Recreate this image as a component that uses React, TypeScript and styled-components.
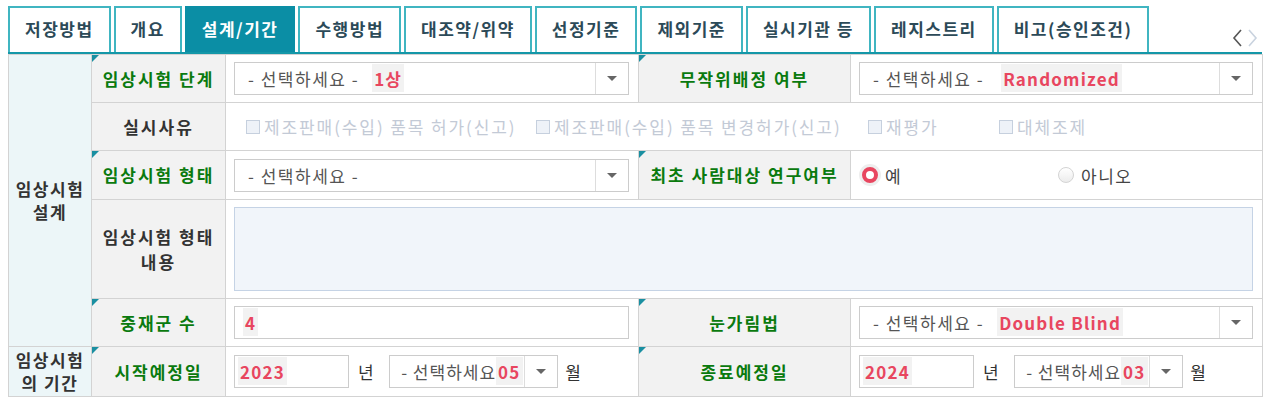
import React from "react";
import styled, { createGlobalStyle, css } from "styled-components";

const GlobalStyle = createGlobalStyle`
    body {
        margin: 0;
        background: #ffffff;
        font-family: "Noto Sans CJK KR", "Noto Sans", sans-serif;
        font-size: 17px;
        letter-spacing: 1.5px;
        color: #333333;
    }
`;

const Page = styled.div`
    width: 1254px;
    padding: 6px 0 10px 8px;
`;

const TabBar = styled.div`
    display: flex;
    align-items: flex-end;
    gap: 3px;
    height: 46px;
    border-bottom: 2px solid #1497a8;
`;

const Tab = styled.div<{ $active?: boolean }>`
    height: 46px;
    box-sizing: border-box;
    padding: 0 15px 3px;
    display: flex;
    align-items: center;
    border: 2px solid #40b5c1;
    border-bottom: none;
    background: #ffffff;
    color: #2c4a58;
    font-weight: 700;
    font-size: 17px;
    letter-spacing: 1.5px;
    white-space: nowrap;

    ${(p) =>
        p.$active &&
        css`
            background: #0b8ea5;
            border-color: #0b8ea5;
            color: #ffffff;
        `}
`;

const TabNav = styled.div`
    margin-left: auto;
    margin-right: 4px;
    display: flex;
    gap: 4px;
    align-self: center;
    padding-top: 18px;
`;

const Table = styled.table`
    width: 1254px;
    border-collapse: collapse;
    table-layout: fixed;
    border: 1px solid #d3d3d3;
    border-top: none;
`;

const Col = styled.col<{ $w: number }>`
    width: ${(p) => p.$w}px;
`;

const Row = styled.tr<{ $h: number }>`
    height: ${(p) => p.$h}px;
`;

const GroupCell = styled.td`
    background: #ecf6f8;
    border: 1px solid #d3d3d3;
    text-align: center;
    font-weight: 700;
    letter-spacing: 1.5px;
    color: #333333;
    line-height: 1.35;
    padding: 0;
`;

const LabelCell = styled.td<{ $required?: boolean }>`
    position: relative;
    background: #f2f2f2;
    border: 1px solid #d3d3d3;
    text-align: center;
    font-weight: 700;
    letter-spacing: 2px;
    line-height: 1.5;
    color: ${(p) => (p.$required ? "#0a7a0e" : "#333333")};
    padding: 0 2px;

    ${(p) =>
        p.$required &&
        css`
            &::before {
                content: "";
                position: absolute;
                left: 0;
                top: 0;
                border-top: 7px solid #1a8fa1;
                border-right: 7px solid transparent;
            }
        `}
`;

const ValueCell = styled.td`
    border: 1px solid #d3d3d3;
    background: #ffffff;
    padding: 0 9px 0 8px;
`;

const Line = styled.div`
    display: flex;
    align-items: center;
`;

const SelectBox = styled.div<{ $w?: number }>`
    display: flex;
    align-items: stretch;
    height: 33px;
    box-sizing: border-box;
    width: ${(p) => (p.$w ? `${p.$w}px` : "100%")};
    border: 1px solid #cccccc;
    background: #ffffff;
`;

const SelectText = styled.div<{ $compact?: boolean }>`
    flex: 1;
    display: flex;
    align-items: center;
    padding-left: ${(p) => (p.$compact ? 11 : 13)}px;
    letter-spacing: ${(p) => (p.$compact ? 1 : 1.5)}px;
    color: #555555;
    white-space: nowrap;
    overflow: hidden;
`;

const SelectArrow = styled.div`
    width: 32px;
    flex-shrink: 0;
    border-left: 1px solid #dddddd;
    display: flex;
    align-items: center;
    justify-content: center;

    &::after {
        content: "";
        border-left: 5px solid transparent;
        border-right: 5px solid transparent;
        border-top: 5px solid #666666;
    }
`;

const Picked = styled.span<{ $gap?: number }>`
    display: inline-flex;
    align-items: center;
    height: 28px;
    margin-left: ${(p) => p.$gap ?? 0}px;
    padding: 0 2px;
    background: #f2f2f2;
    color: #e8465f;
    font-weight: 700;
    letter-spacing: 1.2px;
    align-self: flex-start;
    margin-top: 1px;
`;

const TextBox = styled.div<{ $w?: number }>`
    height: 33px;
    box-sizing: border-box;
    width: ${(p) => (p.$w ? `${p.$w}px` : "100%")};
    border: 1px solid #cccccc;
    padding: 0 3px;
    display: flex;
    background: #ffffff;
`;

const Unit = styled.span<{ $l: number; $r: number }>`
    margin: 0 ${(p) => p.$r}px 0 ${(p) => p.$l}px;
    color: #333333;
    font-weight: 400;
`;

const CheckRow = styled.div`
    display: flex;
    align-items: center;
    padding-left: 12px;
`;

const CheckItem = styled.label<{ $w: number }>`
    width: ${(p) => p.$w}px;
    display: flex;
    align-items: center;
    gap: 4px;
    color: #c3cad6;
    letter-spacing: 1.9px;
    white-space: nowrap;
`;

const CheckBox = styled.span`
    width: 14px;
    height: 14px;
    box-sizing: border-box;
    border: 1px solid #c6d0de;
    background: #eef2f8;
`;

const RadioRow = styled.div`
    display: flex;
    align-items: center;
    padding-left: 3px;
`;

const RadioItem = styled.label<{ $w: number }>`
    width: ${(p) => p.$w}px;
    display: flex;
    align-items: center;
    gap: 7px;
    color: #444444;
`;

const RadioMark = styled.span<{ $checked?: boolean }>`
    width: 16px;
    height: 16px;
    box-sizing: border-box;
    border-radius: 50%;
    ${(p) =>
        p.$checked
            ? css`
                  border: 4px solid #e8465f;
                  background: #ffffff;
                  box-shadow: 0 0 0 3px #eeeeee;
              `
            : css`
                  border: 1px solid #d4d4d4;
                  background: linear-gradient(#ffffff, #ececec);
              `}
`;

const TextArea = styled.div`
    height: 84px;
    box-sizing: border-box;
    border: 1px solid #c5d3e5;
    background: #f1f5fa;
`;

function Select({ value, gap = 13, width }: { value?: string; gap?: number; width?: number }) {
    return (
        <SelectBox $w={width}>
            <SelectText $compact={!!width}>
                {width ? "- 선택하세요" : "- 선택하세요 -"}
                {value && <Picked $gap={gap}>{value}</Picked>}
            </SelectText>
            <SelectArrow />
        </SelectBox>
    );
}

function DateField({ year, month }: { year: string; month: string }) {
    return (
        <Line>
            <TextBox $w={115}>
                <Picked>{year}</Picked>
            </TextBox>
            <Unit $l={9} $r={14}>년</Unit>
            <Select value={month} gap={0} width={169} />
            <Unit $l={7} $r={0}>월</Unit>
        </Line>
    );
}

const tabs = ["저장방법", "개요", "설계/기간", "수행방법", "대조약/위약", "선정기준", "제외기준", "실시기관 등", "레지스트리", "비고(승인조건)"];

export default function App() {
    return (
        <Page>
            <GlobalStyle />
            <TabBar>
                {tabs.map((t) => (
                    <Tab key={t} $active={t === "설계/기간"}>
                        {t}
                    </Tab>
                ))}
                <TabNav>
                    <svg width="11" height="18" viewBox="0 0 11 18">
                        <path d="M9 1 L2 9 L9 17" fill="none" stroke="#555" strokeWidth="1.6" />
                    </svg>
                    <svg width="11" height="18" viewBox="0 0 11 18">
                        <path d="M2 1 L9 9 L2 17" fill="none" stroke="#c9d3df" strokeWidth="1.6" />
                    </svg>
                </TabNav>
            </TabBar>
            <Table>
                <colgroup>
                    <Col $w={83} />
                    <Col $w={134} />
                    <Col $w={413} />
                    <Col $w={212} />
                    <Col $w={412} />
                </colgroup>
                <tbody>
                    <Row $h={48}>
                        <GroupCell rowSpan={5}>
                            임상시험
                            <br />
                            설계
                        </GroupCell>
                        <LabelCell $required>임상시험 단계</LabelCell>
                        <ValueCell>
                            <Select value="1상" />
                        </ValueCell>
                        <LabelCell $required>무작위배정 여부</LabelCell>
                        <ValueCell>
                            <Select value="Randomized" gap={17} />
                        </ValueCell>
                    </Row>
                    <Row $h={48}>
                        <LabelCell>실시사유</LabelCell>
                        <ValueCell colSpan={3}>
                            <CheckRow>
                                <CheckItem $w={290}>
                                    <CheckBox />
                                    제조판매(수입) 품목 허가(신고)
                                </CheckItem>
                                <CheckItem $w={332}>
                                    <CheckBox />
                                    제조판매(수입) 품목 변경허가(신고)
                                </CheckItem>
                                <CheckItem $w={131}>
                                    <CheckBox />
                                    재평가
                                </CheckItem>
                                <CheckItem $w={150}>
                                    <CheckBox />
                                    대체조제
                                </CheckItem>
                            </CheckRow>
                        </ValueCell>
                    </Row>
                    <Row $h={49}>
                        <LabelCell $required>임상시험 형태</LabelCell>
                        <ValueCell>
                            <Select />
                        </ValueCell>
                        <LabelCell $required>최초 사람대상 연구여부</LabelCell>
                        <ValueCell>
                            <RadioRow>
                                <RadioItem $w={196}>
                                    <RadioMark $checked />예
                                </RadioItem>
                                <RadioItem $w={120}>
                                    <RadioMark />
                                    아니오
                                </RadioItem>
                            </RadioRow>
                        </ValueCell>
                    </Row>
                    <Row $h={99}>
                        <LabelCell>
                            임상시험 형태
                            <br />
                            내용
                        </LabelCell>
                        <ValueCell colSpan={3}>
                            <TextArea />
                        </ValueCell>
                    </Row>
                    <Row $h={48}>
                        <LabelCell $required>중재군 수</LabelCell>
                        <ValueCell>
                            <TextBox>
                                <Picked $gap={5}>4</Picked>
                            </TextBox>
                        </ValueCell>
                        <LabelCell $required>눈가림법</LabelCell>
                        <ValueCell>
                            <Select value="Double Blind" gap={13} />
                        </ValueCell>
                    </Row>
                    <Row $h={50}>
                        <GroupCell>
                            임상시험
                            <br />의 기간
                        </GroupCell>
                        <LabelCell $required>시작예정일</LabelCell>
                        <ValueCell>
                            <DateField year="2023" month="05" />
                        </ValueCell>
                        <LabelCell $required>종료예정일</LabelCell>
                        <ValueCell>
                            <DateField year="2024" month="03" />
                        </ValueCell>
                    </Row>
                </tbody>
            </Table>
        </Page>
    );
}
